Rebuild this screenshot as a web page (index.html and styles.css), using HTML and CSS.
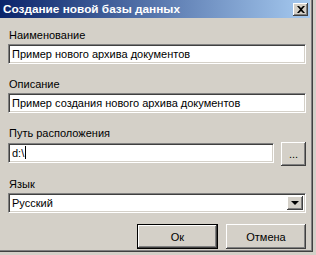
FILE: index.html
```html
<!DOCTYPE html>
<html>
<head>
	<title>Создание новой базы данных</title>
	<link rel="stylesheet" href="styles.css">
</head>
<body>
	<div class="window">
		<div class="caption">
			<span class="caption-text">Создание новой базы данных</span>
			<button class="close-btn" title="Закрыть">
				<svg width="8" height="7" viewBox="0 0 8 7">
					<path d="M0 0h2l2 2 2-2h2L5 3.5 8 7H6L4 5 2 7H0l3-3.5z" fill="#000"/>
				</svg>
			</button>
		</div>
		<div class="content">
			<div class="label">Наименование</div>
			<div class="field">Пример нового архива документов</div>

			<div class="label">Описание</div>
			<div class="field">Пример создания нового архива документов</div>

			<div class="label">Путь расположения</div>
			<div class="path-row">
				<div class="field path-field">d:\<span class="caret"></span></div>
				<button class="btn browse-btn">...</button>
			</div>

			<div class="label">Язык</div>
			<div class="field select">
				<span class="select-value">Русский</span>
				<span class="select-arrow"></span>
			</div>

			<div class="button-row">
				<button class="btn dialog-btn default-btn">Ок</button>
				<button class="btn dialog-btn">Отмена</button>
			</div>
		</div>
	</div>
</body>
</html>
```

FILE: styles.css
```css
body {
	margin: 0;
	width: 316px;
	height: 255px;
	background-color: #d4d0c8;
	font-family: "Liberation Sans", Arial, sans-serif;
	font-size: 11px;
	color: #000;
	overflow: hidden;
}

.window {
	width: 313px;
	height: 252px;
	box-sizing: border-box;
	border-right: 1px solid #404040;
	border-bottom: 1px solid #404040;
	box-shadow: inset -1px -1px 0 #808080;
	background-color: #d4d0c8;
}

.caption {
	height: 18px;
	margin-right: 2px;
	display: flex;
	align-items: center;
	justify-content: space-between;
	background: linear-gradient(to right, #0a246a, #a6caf0);
	padding-left: 3px;
	padding-right: 2px;
}

.caption-text {
	color: #fff;
	font-weight: bold;
	font-size: 11.8px;
	white-space: nowrap;
}

.close-btn {
	width: 15px;
	height: 13px;
	padding: 0;
	border: none;
	background-color: #d4d0c8;
	box-shadow: inset -1px -1px 0 #404040, inset 1px 1px 0 #fff, inset -2px -2px 0 #808080;
	display: flex;
	align-items: center;
	justify-content: center;
}

.content {
	padding: 11px 0 0 8px;
	width: 298px;
	display: flex;
	flex-direction: column;
}

.label {
	height: 13px;
	line-height: 13px;
	padding-left: 1px;
	margin-bottom: 2px;
}

.field {
	height: 20px;
	box-sizing: border-box;
	background-color: #fff;
	border-top: 1px solid #808080;
	border-left: 1px solid #808080;
	border-right: 1px solid #fff;
	border-bottom: 1px solid #fff;
	box-shadow: inset 1px 1px 0 #404040, inset -1px -1px 0 #d4d0c8;
	padding: 0 3px;
	line-height: 18px;
	margin-bottom: 14px;
	white-space: nowrap;
	overflow: hidden;
}

.path-row {
	display: flex;
	align-items: flex-start;
	justify-content: space-between;
	margin-bottom: 12px;
}

.path-field {
	width: 266px;
	margin-bottom: 0;
	margin-top: 1px;
}

.caret {
	display: inline-block;
	width: 1px;
	height: 13px;
	background-color: #000;
	vertical-align: -2px;
	margin-left: 1px;
}

.btn {
	font-family: "Liberation Sans", Arial, sans-serif;
	font-size: 11px;
	color: #000;
	background-color: #d4d0c8;
	border: none;
	padding: 0;
	box-shadow: inset -1px -1px 0 #404040, inset 1px 1px 0 #fff, inset -2px -2px 0 #808080, inset 2px 2px 0 #d4d0c8;
}

.browse-btn {
	width: 25px;
	height: 24px;
	line-height: 20px;
}

.select {
	display: flex;
	align-items: center;
	justify-content: space-between;
	padding: 0 2px 0 3px;
	margin-bottom: 11px;
}

.select-arrow {
	width: 16px;
	height: 14px;
	background-color: #d4d0c8;
	box-shadow: inset -1px -1px 0 #404040, inset 1px 1px 0 #fff, inset -2px -2px 0 #808080;
	position: relative;
}

.select-arrow::after {
	content: "";
	position: absolute;
	left: 4px;
	top: 5px;
	border-left: 4px solid transparent;
	border-right: 4px solid transparent;
	border-top: 4px solid #000;
}

.button-row {
	display: flex;
	justify-content: flex-end;
	gap: 8px;
}

.dialog-btn {
	width: 80px;
	height: 25px;
}

.default-btn {
	width: 81px;
	border: 1px solid #000;
}
```
